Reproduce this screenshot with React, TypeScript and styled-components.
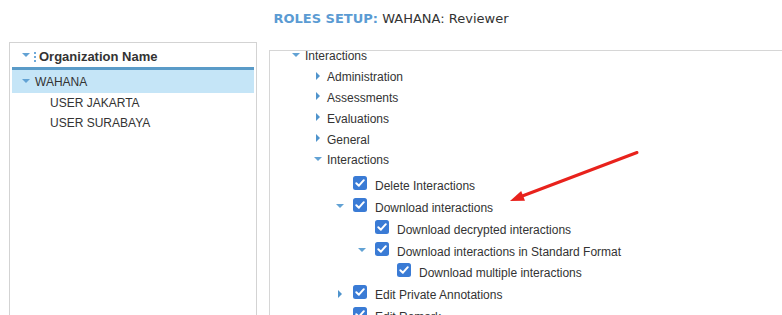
import React from 'react';
import styled, { createGlobalStyle } from 'styled-components';

const Global = createGlobalStyle`
  html, body { margin: 0; padding: 0; background: #fff; overflow: hidden; }
  body { font-family: "Liberation Sans", Arial, sans-serif; color: #333; }
`;

const Page = styled.div`
  position: relative;
  width: 782px;
  height: 315px;
  overflow: hidden;
`;

const Title = styled.div`
  box-sizing: border-box;
  height: 42px;
  padding-top: 10px;
  text-align: center;
  font-family: "DejaVu Sans", Verdana, sans-serif;
  font-size: 13px;
  line-height: 18px;
  color: #333;
  white-space: nowrap;
`;

const TitleKey = styled.span`
  color: #5b9bd3;
  font-weight: bold;
`;

const Main = styled.div`
  display: flex;
  align-items: flex-start;
  padding-left: 9px;
`;

const LeftPanel = styled.div`
  box-sizing: border-box;
  width: 248px;
  height: 290px;
  border: 1px solid #d3d3d3;
  border-bottom: none;
  padding: 0 2px;
`;

const PanelHeader = styled.div`
  display: flex;
  align-items: center;
  height: 22px;
  padding: 2px 0 0 10px;
  border-bottom: 3px solid #5a9bc8;
  font-size: 13px;
  font-weight: bold;
  color: #333;
`;

const HeaderHandle = styled.span`
  width: 0;
  height: 10px;
  margin: 2px 3px 0 4px;
  border-left: 2px dotted #6fa9d9;
  align-self: center;
`;

const OrgRow = styled.div<{ $selected?: boolean; $level: number }>`
  display: flex;
  align-items: center;
  box-sizing: border-box;
  height: ${(p) => (p.$selected ? 23 : 20)}px;
  padding-top: ${(p) => (p.$selected ? 1 : 0)}px;
  padding-left: ${(p) => 10 + p.$level * 15}px;
  background: ${(p) => (p.$selected ? '#c5e5f7' : 'transparent')};
  font-size: 12px;
  color: #333;
  white-space: nowrap;
`;

const OrgSlot = styled.span`
  flex: none;
  width: 13px;
  display: flex;
  align-items: center;
`;

const ArrowDown = styled.span`
  flex: none;
  width: 0;
  height: 0;
  border-left: 4px solid transparent;
  border-right: 4px solid transparent;
  border-top: 4px solid #62a2d4;
  margin-bottom: 3px;
`;

const ArrowRight = styled.span`
  flex: none;
  width: 0;
  height: 0;
  margin-left: 2px;
  border-top: 4px solid transparent;
  border-bottom: 4px solid transparent;
  border-left: 4px solid #4f93cc;
  margin-bottom: 3px;
`;

const RightPanel = styled.div`
  flex: 1;
  box-sizing: border-box;
  height: 280px;
  margin: 8px 0 0 12px;
  border-top: 1px solid #d6d6d6;
  border-left: 1px solid #d6d6d6;
  overflow: hidden;
`;

const TreeList = styled.div`
  margin-top: -5px;
`;

const CheckGroup = styled.div`
  padding-top: 4.5px;
`;

const TreeRow = styled.div<{ $level: number; $h: number }>`
  display: flex;
  align-items: center;
  height: ${(p) => p.$h}px;
  padding-left: ${(p) => 20 + p.$level * 22}px;
  font-size: 12px;
  color: #333;
  white-space: nowrap;
`;

const ToggleSlot = styled.span`
  flex: none;
  box-sizing: border-box;
  width: 15px;
  padding-left: 2px;
  display: flex;
  align-items: center;
`;

const CheckBox = styled.span`
  flex: none;
  width: 14px;
  height: 14px;
  margin: 0 8px 6px 4px;
  display: block;
  line-height: 0;
`;

const RedArrow = styled.svg`
  position: absolute;
  left: 0;
  top: 0;
  pointer-events: none;
`;

type Toggle = 'open' | 'closed' | undefined;

const Toggler = ({ t }: { t: Toggle }) => (
  <ToggleSlot>{t === 'open' ? <ArrowDown /> : t === 'closed' ? <ArrowRight /> : null}</ToggleSlot>
);

const Check = () => (
  <CheckBox>
    <svg width="14" height="14" viewBox="0 0 14 14">
      <rect x="0" y="0" width="14" height="14" rx="2.5" fill="#3a7bd5" />
      <polyline points="3.3,7.2 5.9,9.7 10.8,4.2" fill="none" stroke="#fff" strokeWidth="2" strokeLinecap="round" strokeLinejoin="round" />
    </svg>
  </CheckBox>
);

const groups = [
  { level: 0, label: 'Interactions', t: 'open' as Toggle },
  { level: 1, label: 'Administration', t: 'closed' as Toggle },
  { level: 1, label: 'Assessments', t: 'closed' as Toggle },
  { level: 1, label: 'Evaluations', t: 'closed' as Toggle },
  { level: 1, label: 'General', t: 'closed' as Toggle },
  { level: 1, label: 'Interactions', t: 'open' as Toggle },
];

const perms = [
  { level: 2, label: 'Delete Interactions', t: undefined as Toggle },
  { level: 2, label: 'Download interactions', t: 'open' as Toggle },
  { level: 3, label: 'Download decrypted interactions', t: undefined as Toggle },
  { level: 3, label: 'Download interactions in Standard Format', t: 'open' as Toggle },
  { level: 4, label: 'Download multiple interactions', t: undefined as Toggle },
  { level: 2, label: 'Edit Private Annotations', t: 'closed' as Toggle },
  { level: 2, label: 'Edit Remark', t: undefined as Toggle },
];

export default function App() {
  return (
    <Page>
      <Global />
      <Title>
        <TitleKey>ROLES SETUP:</TitleKey> WAHANA: Reviewer
      </Title>
      <Main>
        <LeftPanel>
          <PanelHeader>
            <ArrowDown />
            <HeaderHandle />
            Organization Name
          </PanelHeader>
          <OrgRow $selected $level={0}>
            <OrgSlot>
              <ArrowDown />
            </OrgSlot>
            WAHANA
          </OrgRow>
          <OrgRow $level={1}>
            <OrgSlot />
            USER JAKARTA
          </OrgRow>
          <OrgRow $level={1}>
            <OrgSlot />
            USER SURABAYA
          </OrgRow>
        </LeftPanel>
        <RightPanel>
          <TreeList>
            {groups.map((g, i) => (
              <TreeRow key={'g' + i} $level={g.level} $h={20.8}>
                <Toggler t={g.t} />
                {g.label}
              </TreeRow>
            ))}
            <CheckGroup>
              {perms.map((p, i) => (
                <TreeRow key={'p' + i} $level={p.level} $h={21.8}>
                  <Toggler t={p.t} />
                  <Check />
                  {p.label}
                </TreeRow>
              ))}
            </CheckGroup>
          </TreeList>
        </RightPanel>
      </Main>
      <RedArrow width="782" height="315" viewBox="0 0 782 315">
        <line x1="637" y1="152.5" x2="521" y2="196.5" stroke="#e8221c" strokeWidth="3" strokeLinecap="round" />
        <polygon points="510,201 525,200.8 521.2,191" fill="#e8221c" />
      </RedArrow>
    </Page>
  );
}
